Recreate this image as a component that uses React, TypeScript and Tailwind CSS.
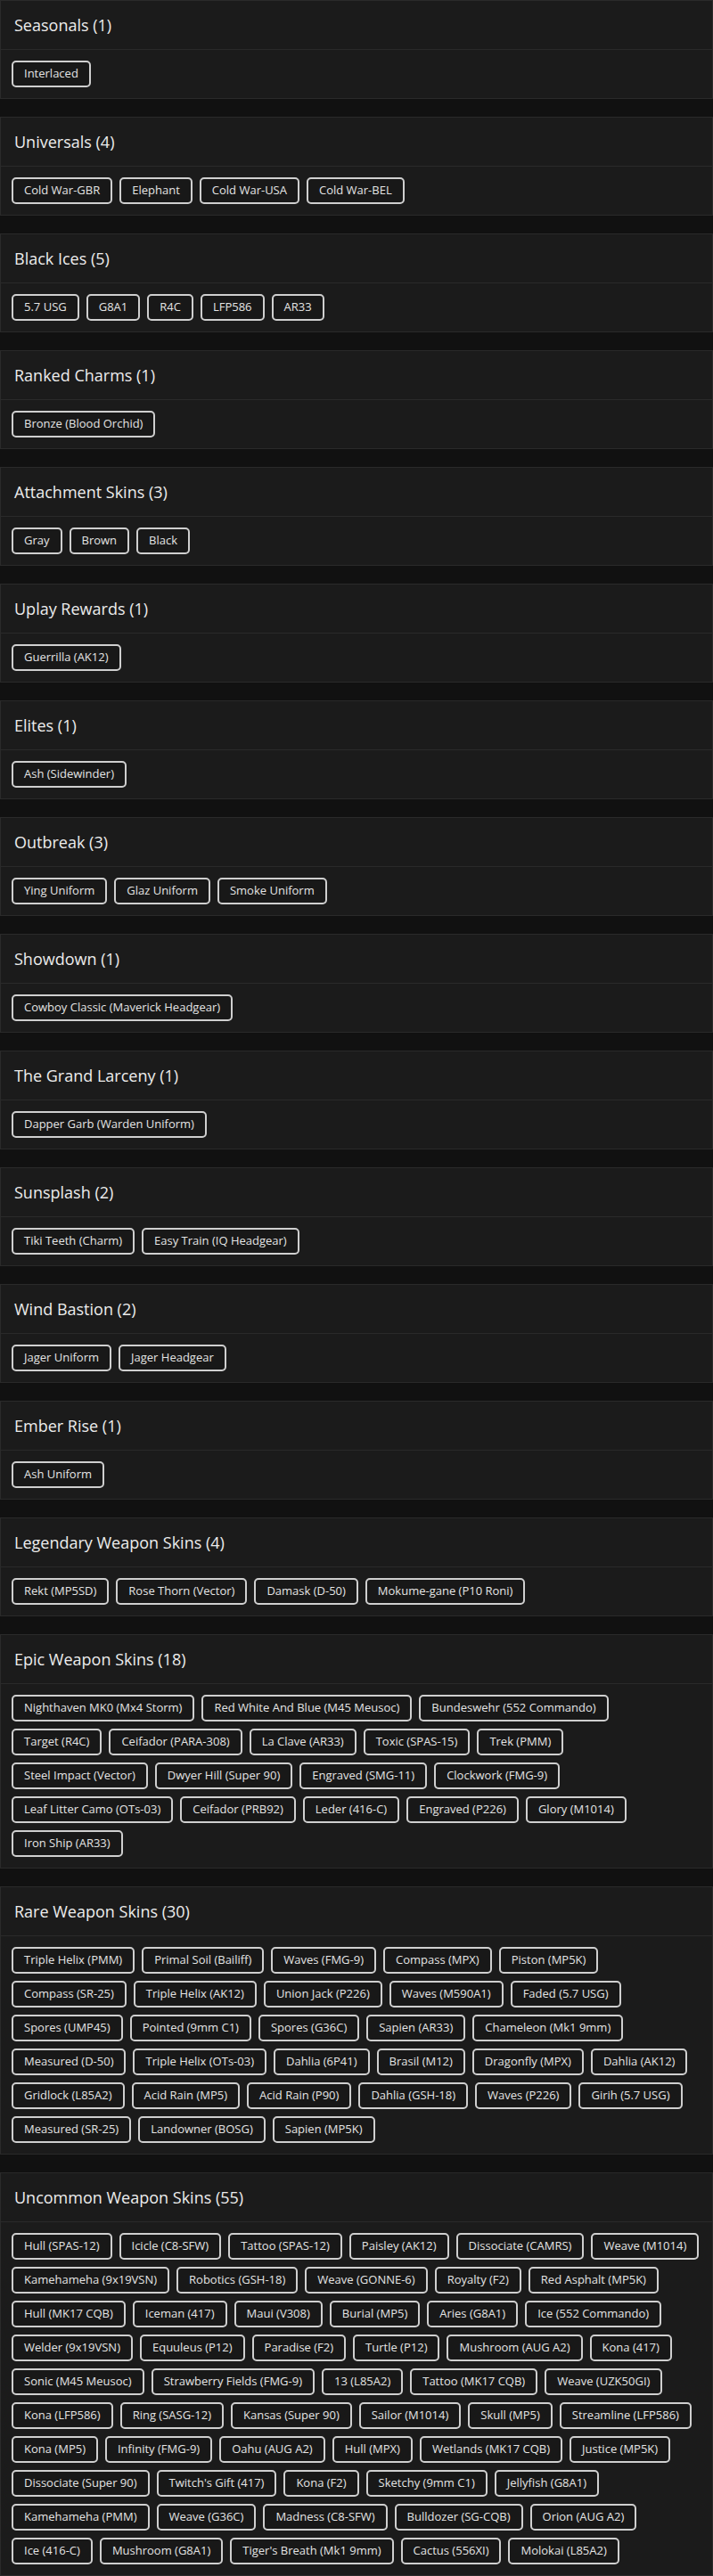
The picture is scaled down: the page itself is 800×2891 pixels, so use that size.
import React from "react";

type Section = { title: string; rows: string[][] };

const sections: Section[] = [
  { title: "Seasonals (1)", rows: [["Interlaced"]] },
  { title: "Universals (4)", rows: [["Cold War-GBR", "Elephant", "Cold War-USA", "Cold War-BEL"]] },
  { title: "Black Ices (5)", rows: [["5.7 USG", "G8A1", "R4C", "LFP586", "AR33"]] },
  { title: "Ranked Charms (1)", rows: [["Bronze (Blood Orchid)"]] },
  { title: "Attachment Skins (3)", rows: [["Gray", "Brown", "Black"]] },
  { title: "Uplay Rewards (1)", rows: [["Guerrilla (AK12)"]] },
  { title: "Elites (1)", rows: [["Ash (Sidewinder)"]] },
  { title: "Outbreak (3)", rows: [["Ying Uniform", "Glaz Uniform", "Smoke Uniform"]] },
  { title: "Showdown (1)", rows: [["Cowboy Classic (Maverick Headgear)"]] },
  { title: "The Grand Larceny (1)", rows: [["Dapper Garb (Warden Uniform)"]] },
  { title: "Sunsplash (2)", rows: [["Tiki Teeth (Charm)", "Easy Train (IQ Headgear)"]] },
  { title: "Wind Bastion (2)", rows: [["Jager Uniform", "Jager Headgear"]] },
  { title: "Ember Rise (1)", rows: [["Ash Uniform"]] },
  {
    title: "Legendary Weapon Skins (4)",
    rows: [["Rekt (MP5SD)", "Rose Thorn (Vector)", "Damask (D-50)", "Mokume-gane (P10 Roni)"]],
  },
  {
    title: "Epic Weapon Skins (18)",
    rows: [
      ["Nighthaven MK0 (Mx4 Storm)", "Red White And Blue (M45 Meusoc)", "Bundeswehr (552 Commando)"],
      ["Target (R4C)", "Ceifador (PARA-308)", "La Clave (AR33)", "Toxic (SPAS-15)", "Trek (PMM)"],
      ["Steel Impact (Vector)", "Dwyer Hill (Super 90)", "Engraved (SMG-11)", "Clockwork (FMG-9)"],
      ["Leaf Litter Camo (OTs-03)", "Ceifador (PRB92)", "Leder (416-C)", "Engraved (P226)", "Glory (M1014)"],
      ["Iron Ship (AR33)"],
    ],
  },
  {
    title: "Rare Weapon Skins (30)",
    rows: [
      ["Triple Helix (PMM)", "Primal Soil (Bailiff)", "Waves (FMG-9)", "Compass (MPX)", "Piston (MP5K)"],
      ["Compass (SR-25)", "Triple Helix (AK12)", "Union Jack (P226)", "Waves (M590A1)", "Faded (5.7 USG)"],
      ["Spores (UMP45)", "Pointed (9mm C1)", "Spores (G36C)", "Sapien (AR33)", "Chameleon (Mk1 9mm)"],
      ["Measured (D-50)", "Triple Helix (OTs-03)", "Dahlia (6P41)", "Brasil (M12)", "Dragonfly (MPX)", "Dahlia (AK12)"],
      ["Gridlock (L85A2)", "Acid Rain (MP5)", "Acid Rain (P90)", "Dahlia (GSH-18)", "Waves (P226)", "Girih (5.7 USG)"],
      ["Measured (SR-25)", "Landowner (BOSG)", "Sapien (MP5K)"],
    ],
  },
  {
    title: "Uncommon Weapon Skins (55)",
    rows: [
      ["Hull (SPAS-12)", "Icicle (C8-SFW)", "Tattoo (SPAS-12)", "Paisley (AK12)", "Dissociate (CAMRS)", "Weave (M1014)"],
      ["Kamehameha (9x19VSN)", "Robotics (GSH-18)", "Weave (GONNE-6)", "Royalty (F2)", "Red Asphalt (MP5K)"],
      ["Hull (MK17 CQB)", "Iceman (417)", "Maui (V308)", "Burial (MP5)", "Aries (G8A1)", "Ice (552 Commando)"],
      ["Welder (9x19VSN)", "Equuleus (P12)", "Paradise (F2)", "Turtle (P12)", "Mushroom (AUG A2)", "Kona (417)"],
      ["Sonic (M45 Meusoc)", "Strawberry Fields (FMG-9)", "13 (L85A2)", "Tattoo (MK17 CQB)", "Weave (UZK50GI)"],
      ["Kona (LFP586)", "Ring (SASG-12)", "Kansas (Super 90)", "Sailor (M1014)", "Skull (MP5)", "Streamline (LFP586)"],
      ["Kona (MP5)", "Infinity (FMG-9)", "Oahu (AUG A2)", "Hull (MPX)", "Wetlands (MK17 CQB)", "Justice (MP5K)"],
      ["Dissociate (Super 90)", "Twitch's Gift (417)", "Kona (F2)", "Sketchy (9mm C1)", "Jellyfish (G8A1)"],
      ["Kamehameha (PMM)", "Weave (G36C)", "Madness (C8-SFW)", "Bulldozer (SG-CQB)", "Orion (AUG A2)"],
      ["Ice (416-C)", "Mushroom (G8A1)", "Tiger's Breath (Mk1 9mm)", "Cactus (556XI)", "Molokai (L85A2)"],
    ],
  },
];

function Chip({ label }: { label: string }) {
  return (
    <span className="flex h-[30px] shrink-0 items-center whitespace-nowrap rounded-[5px] border-2 border-[#cfcfcf] bg-[#181818] px-3 text-[13px] text-[#e4e4e4]">
      {label}
    </span>
  );
}

function Card({ section }: { section: Section }) {
  return (
    <div className="border border-[#2a2a2a] bg-[#1b1b1b]">
      <div className="flex h-[55px] items-center border-b border-[#2a2a2a] px-[15px] text-[18px] font-medium text-[#ececec]">
        {section.title}
      </div>
      <div className="flex flex-col gap-2 p-3">
        {section.rows.map((row, i) => (
          <div key={i} className="flex gap-2">
            {row.map((c, j) => (
              <Chip key={j} label={c} />
            ))}
          </div>
        ))}
      </div>
    </div>
  );
}

export default function App() {
  return (
    <div
      className="flex min-h-[2891px] w-[800px] flex-col gap-5 bg-[#111111]"
      style={{ fontFamily: '"Open Sans", "Noto Sans", sans-serif' }}
    >
      {sections.map((s, i) => (
        <Card key={i} section={s} />
      ))}
    </div>
  );
}
